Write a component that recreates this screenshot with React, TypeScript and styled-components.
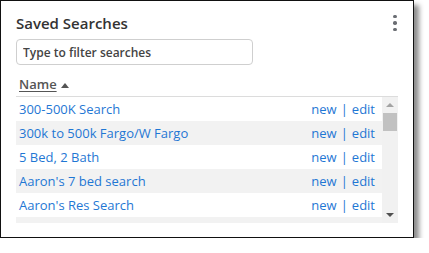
import styled, { createGlobalStyle } from "styled-components";

const GlobalStyle = createGlobalStyle`
  html, body {
    margin: 0;
    padding: 0;
    background: #ffffff;
  }
  body {
    font-family: "Open Sans", "Liberation Sans", Arial, sans-serif;
  }
`;

const Panel = styled.section`
  box-sizing: border-box;
  width: 414px;
  height: 238px;
  border: 1px solid #111;
  background: #fff;
  box-shadow: 5px 5px 5px rgba(0, 0, 0, 0.45);
  padding: 10px 15px 0 15px;
  display: flex;
  flex-direction: column;
`;

const TitleRow = styled.div`
  display: flex;
  align-items: center;
  justify-content: space-between;
  height: 24px;
`;

const Title = styled.h2`
  margin: 0;
  font-size: 15px;
  font-weight: 600;
  color: #333;
  line-height: 24px;
`;

const MenuButton = styled.button`
  border: 0;
  background: none;
  padding: 0;
  width: 6px;
  display: flex;
  flex-direction: column;
  align-items: center;
  gap: 3px;
  cursor: pointer;
`;

const Dot = styled.span`
  width: 3.5px;
  height: 3.5px;
  border-radius: 50%;
  background: #6a6d73;
`;

const FilterInput = styled.input`
  box-sizing: border-box;
  margin-top: 4px;
  width: 237px;
  height: 26px;
  border: 1px solid #cfcfcf;
  border-radius: 4px;
  padding: 0 6px;
  font-family: inherit;
  font-size: 12px;
  font-weight: 600;
  outline: none;

  &::placeholder {
    color: #444;
    opacity: 1;
  }
`;

const HeaderRow = styled.div`
  margin-top: 7px;
  height: 24px;
  border-bottom: 1px solid #dcdcdc;
  display: flex;
  align-items: center;
  padding-left: 3px;
  gap: 4px;
`;

const SortLabel = styled.span`
  font-size: 13px;
  font-weight: 600;
  color: #555;
  text-decoration: underline;
  text-underline-offset: 2px;
`;

const SortArrow = styled.span`
  width: 0;
  height: 0;
  border-left: 4px solid transparent;
  border-right: 4px solid transparent;
  border-bottom: 5px solid #555;
  margin-top: 2px;
`;

const ListArea = styled.div`
  display: flex;
  height: 126px;
  overflow: hidden;
`;

const Rows = styled.ul`
  list-style: none;
  margin: 0;
  padding: 0;
  flex: 1;
`;

const Row = styled.li<{ $striped: boolean }>`
  height: 24px;
  display: flex;
  align-items: center;
  justify-content: space-between;
  padding: 0 7px 0 3px;
  background: ${(p) => (p.$striped ? "#f2f2f2" : "#ffffff")};
  font-size: 13px;
`;

const RowLink = styled.a`
  color: #1f77d4;
  text-decoration: none;
`;

const Actions = styled.span`
  color: #1f77d4;
  display: flex;
  gap: 4px;
`;

const Scrollbar = styled.div`
  width: 16px;
  background: #f1f1f1;
  display: flex;
  flex-direction: column;
  align-items: center;
`;

const ArrowBtn = styled.div<{ $down?: boolean }>`
  height: 16px;
  width: 16px;
  display: flex;
  align-items: center;
  justify-content: center;

  &::after {
    content: "";
    width: 0;
    height: 0;
    border-left: 4px solid transparent;
    border-right: 4px solid transparent;
    ${(p) =>
      p.$down
        ? "border-top: 4px solid #505050;"
        : "border-bottom: 4px solid #a3a3a3;"}
  }
`;

const Thumb = styled.div`
  width: 14px;
  height: 18px;
  background: #c1c1c1;
`;

const Spacer = styled.div`
  flex: 1;
`;

const searches = [
  "300-500K Search",
  "300k to 500k Fargo/W Fargo",
  "5 Bed, 2 Bath",
  "Aaron's 7 bed search",
  "Aaron's Res Search",
  "Abby's Search",
];

export default function App() {
  return (
    <>
      <GlobalStyle />
      <Panel>
        <TitleRow>
          <Title>Saved Searches</Title>
          <MenuButton aria-label="menu">
            <Dot />
            <Dot />
            <Dot />
          </MenuButton>
        </TitleRow>
        <FilterInput placeholder="Type to filter searches" />
        <HeaderRow>
          <SortLabel>Name</SortLabel>
          <SortArrow />
        </HeaderRow>
        <ListArea>
          <Rows>
            {searches.map((s, i) => (
              <Row key={s} $striped={i % 2 === 1}>
                <RowLink href="#">{s}</RowLink>
                <Actions>
                  <span>new</span>
                  <span>|</span>
                  <span>edit</span>
                </Actions>
              </Row>
            ))}
          </Rows>
          <Scrollbar>
            <ArrowBtn />
            <Thumb />
            <Spacer />
            <ArrowBtn $down />
          </Scrollbar>
        </ListArea>
      </Panel>
    </>
  );
}
